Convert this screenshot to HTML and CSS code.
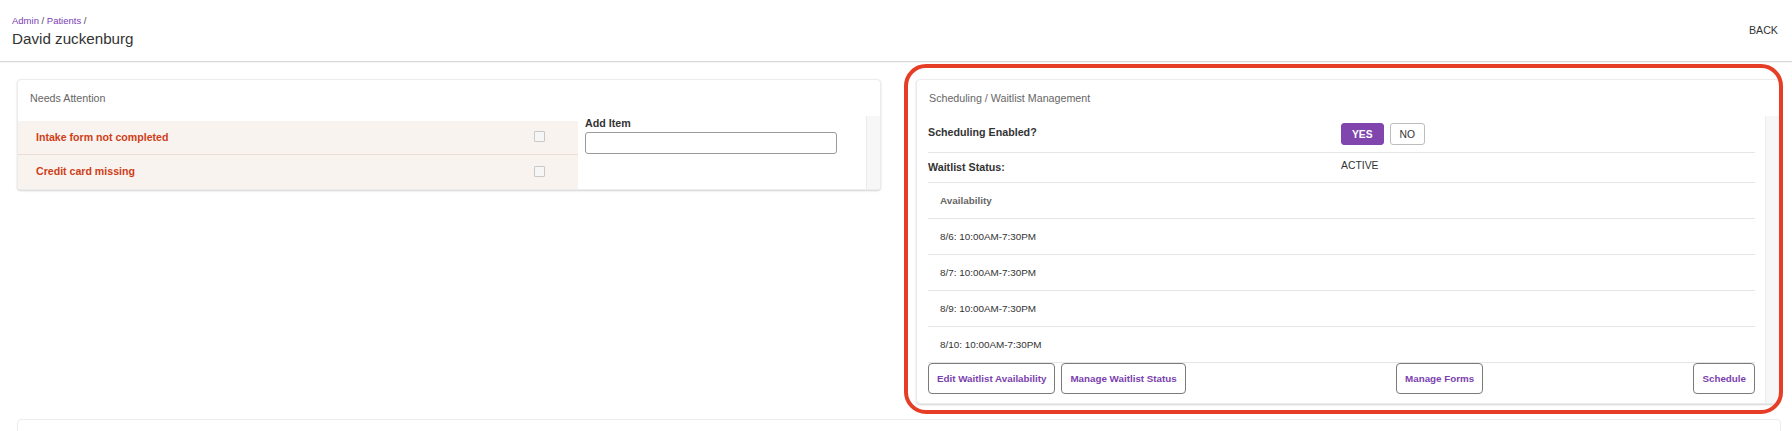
FILE: index.html
```html
<!DOCTYPE html>
<html>
<head>
<meta charset="utf-8">
<link rel="stylesheet" href="styles.css">
</head>
<body>
<header class="page-header">
  <div class="title-block">
    <div class="breadcrumb"><a class="crumb">Admin</a> / <a class="crumb">Patients</a> /</div>
    <h1 class="page-title">David zuckenburg</h1>
  </div>
  <a class="back-link">BACK</a>
</header>

<main class="columns">
  <section class="col">
    <div class="card">
      <div class="card-head">Needs Attention</div>
      <div class="card-body">
        <div class="card-content split">
          <div class="alerts">
            <div class="alert-row"><span class="alert-text">Intake form not completed</span><span class="checkbox"></span></div>
            <div class="alert-row"><span class="alert-text">Credit card missing</span><span class="checkbox"></span></div>
          </div>
          <div class="add-item">
            <label class="field-label">Add Item</label>
            <input class="text-input" type="text">
          </div>
        </div>
        <div class="scroll-track"></div>
      </div>
    </div>
  </section>

  <section class="col highlighted">
    <div class="card">
      <div class="card-head">Scheduling / Waitlist Management</div>
      <div class="card-body">
        <div class="card-content sched">
          <div class="info-row first">
            <div class="info-label">Scheduling Enabled?</div>
            <div class="info-value">
              <button class="toggle on">YES</button>
              <button class="toggle">NO</button>
            </div>
          </div>
          <div class="info-row second">
            <div class="info-label">Waitlist Status:</div>
            <div class="info-value status">ACTIVE</div>
          </div>
          <div class="avail-row avail-head">Availability</div>
          <div class="avail-row">8/6: 10:00AM-7:30PM</div>
          <div class="avail-row">8/7: 10:00AM-7:30PM</div>
          <div class="avail-row">8/9: 10:00AM-7:30PM</div>
          <div class="avail-row">8/10: 10:00AM-7:30PM</div>
          <div class="actions">
            <div class="action-group">
              <button class="action-btn">Edit Waitlist Availability</button>
              <button class="action-btn">Manage Waitlist Status</button>
            </div>
            <div class="action-group">
              <button class="action-btn">Manage Forms</button>
            </div>
            <div class="action-group">
              <button class="action-btn">Schedule</button>
            </div>
          </div>
        </div>
        <div class="scroll-track"></div>
      </div>
    </div>
    <div class="annotation-ring"></div>
  </section>
</main>

<section class="bottom-card"></section>
</body>
</html>
```

FILE: styles.css
```css
* { box-sizing: border-box; }

html, body {
  margin: 0;
  background: #ffffff;
  font-family: "Liberation Sans", Arial, Helvetica, sans-serif;
  color: #333333;
  overflow: hidden;
}

.page-header {
  height: 62px;
  border-bottom: 1px solid #d9d9d9;
  box-shadow: 0 1px 1px rgba(0, 0, 0, 0.04);
  display: flex;
  justify-content: space-between;
  align-items: flex-start;
  padding: 14px 14px 0 12px;
}

.breadcrumb {
  font-size: 9.5px;
  line-height: 13px;
  color: #444;
}

.crumb {
  color: #7b3db3;
}

.page-title {
  margin: 2px 0 0 0;
  font-size: 15.2px;
  line-height: 20px;
  font-weight: normal;
  color: #333;
}

.back-link {
  font-size: 10.7px;
  line-height: 14px;
  margin-top: 9px;
  color: #333;
}

.columns {
  display: flex;
  gap: 35px;
  align-items: flex-start;
  padding: 17px 12px 0 17px;
}

.col {
  flex: 1;
  min-width: 0;
}

.highlighted {
  position: relative;
}

.card {
  background: #fff;
  border: 1px solid #ececec;
  border-radius: 4px;
  box-shadow: 0 1px 2px rgba(0, 0, 0, 0.18);
}

.card-head {
  height: 36px;
  font-size: 10.7px;
  line-height: 36px;
  color: #666;
  padding-left: 12px;
}

.card-body {
  display: flex;
}

.card-content {
  flex: 1;
  min-width: 0;
}

.scroll-track {
  width: 14px;
  background: #f7f7f7;
  border-left: 1px solid #ececec;
}

/* Needs attention */
.split {
  display: flex;
}

.alerts {
  width: 560px;
  padding-top: 5px;
}

.alert-row {
  height: 34px;
  background: #f9f3f0;
  border-bottom: 1px solid #ecdcd6;
  display: flex;
  align-items: center;
  justify-content: space-between;
  padding: 0 33px 2px 18px;
}

.alert-row:last-child {
  border-bottom: none;
}

.alert-text {
  font-size: 10.6px;
  font-weight: bold;
  color: #cf3e17;
}

.checkbox {
  width: 11px;
  height: 11px;
  border: 1px solid #c8c8c8;
  background: #f6f6f6;
  border-radius: 1px;
}

.add-item {
  padding: 0 0 0 7px;
  display: flex;
  flex-direction: column;
  align-items: flex-start;
}

.field-label {
  font-size: 10.7px;
  line-height: 14px;
  font-weight: bold;
  color: #333;
}

.text-input {
  margin-top: 2px;
  width: 252px;
  height: 22px;
  border: 1px solid #9a9a9a;
  border-radius: 3px;
  background: #fff;
  font: inherit;
}

/* Scheduling */
.sched {
  padding: 0 10px 9px 11px;
}

.info-row {
  display: flex;
  align-items: center;
  border-bottom: 1px solid #e6e6e6;
}

.info-row.first {
  height: 37px;
}

.info-row.second {
  height: 30px;
}

.info-label {
  width: 413px;
  font-size: 10.7px;
  font-weight: bold;
  color: #333;
}

.info-row.first .info-label {
  padding-bottom: 4px;
}

.info-row.second .info-label {
  padding-bottom: 1px;
}

.info-value {
  display: flex;
  gap: 6px;
  font-size: 10.4px;
  color: #333;
}

.info-value.status {
  padding-bottom: 5px;
}

.toggle {
  height: 22px;
  padding: 0 9px;
  border: 1px solid #bdbdbd;
  background: #fff;
  border-radius: 3px;
  font-family: inherit;
  font-size: 10.3px;
  color: #333;
}

.toggle.on {
  background: #8046ad;
  border-color: #8046ad;
  color: #fff;
  font-weight: bold;
  padding: 0 10px;
}

.avail-row {
  height: 36px;
  line-height: 35px;
  border-bottom: 1px solid #e6e6e6;
  padding-left: 12px;
  font-size: 9.9px;
  color: #333;
}

.avail-row.avail-head {
  font-weight: bold;
  color: #666;
}

.actions {
  display: flex;
  justify-content: space-between;
}

.action-group {
  display: flex;
  gap: 6px;
}

.action-btn {
  height: 31px;
  padding: 0 8px;
  border: 1px solid #7a7a7a;
  border-radius: 4px;
  background: #fff;
  font-family: inherit;
  font-size: 9.8px;
  font-weight: bold;
  color: #7b3fae;
}

.annotation-ring {
  position: absolute;
  left: -12px;
  top: -15px;
  right: -3px;
  bottom: -10px;
  border: 4.5px solid #e63d26;
  border-radius: 22px;
  pointer-events: none;
}

.bottom-card {
  margin: 15px 11px 0 17px;
  height: 40px;
  border: 1px solid #ececec;
  border-radius: 4px;
  background: #fff;
}
```
